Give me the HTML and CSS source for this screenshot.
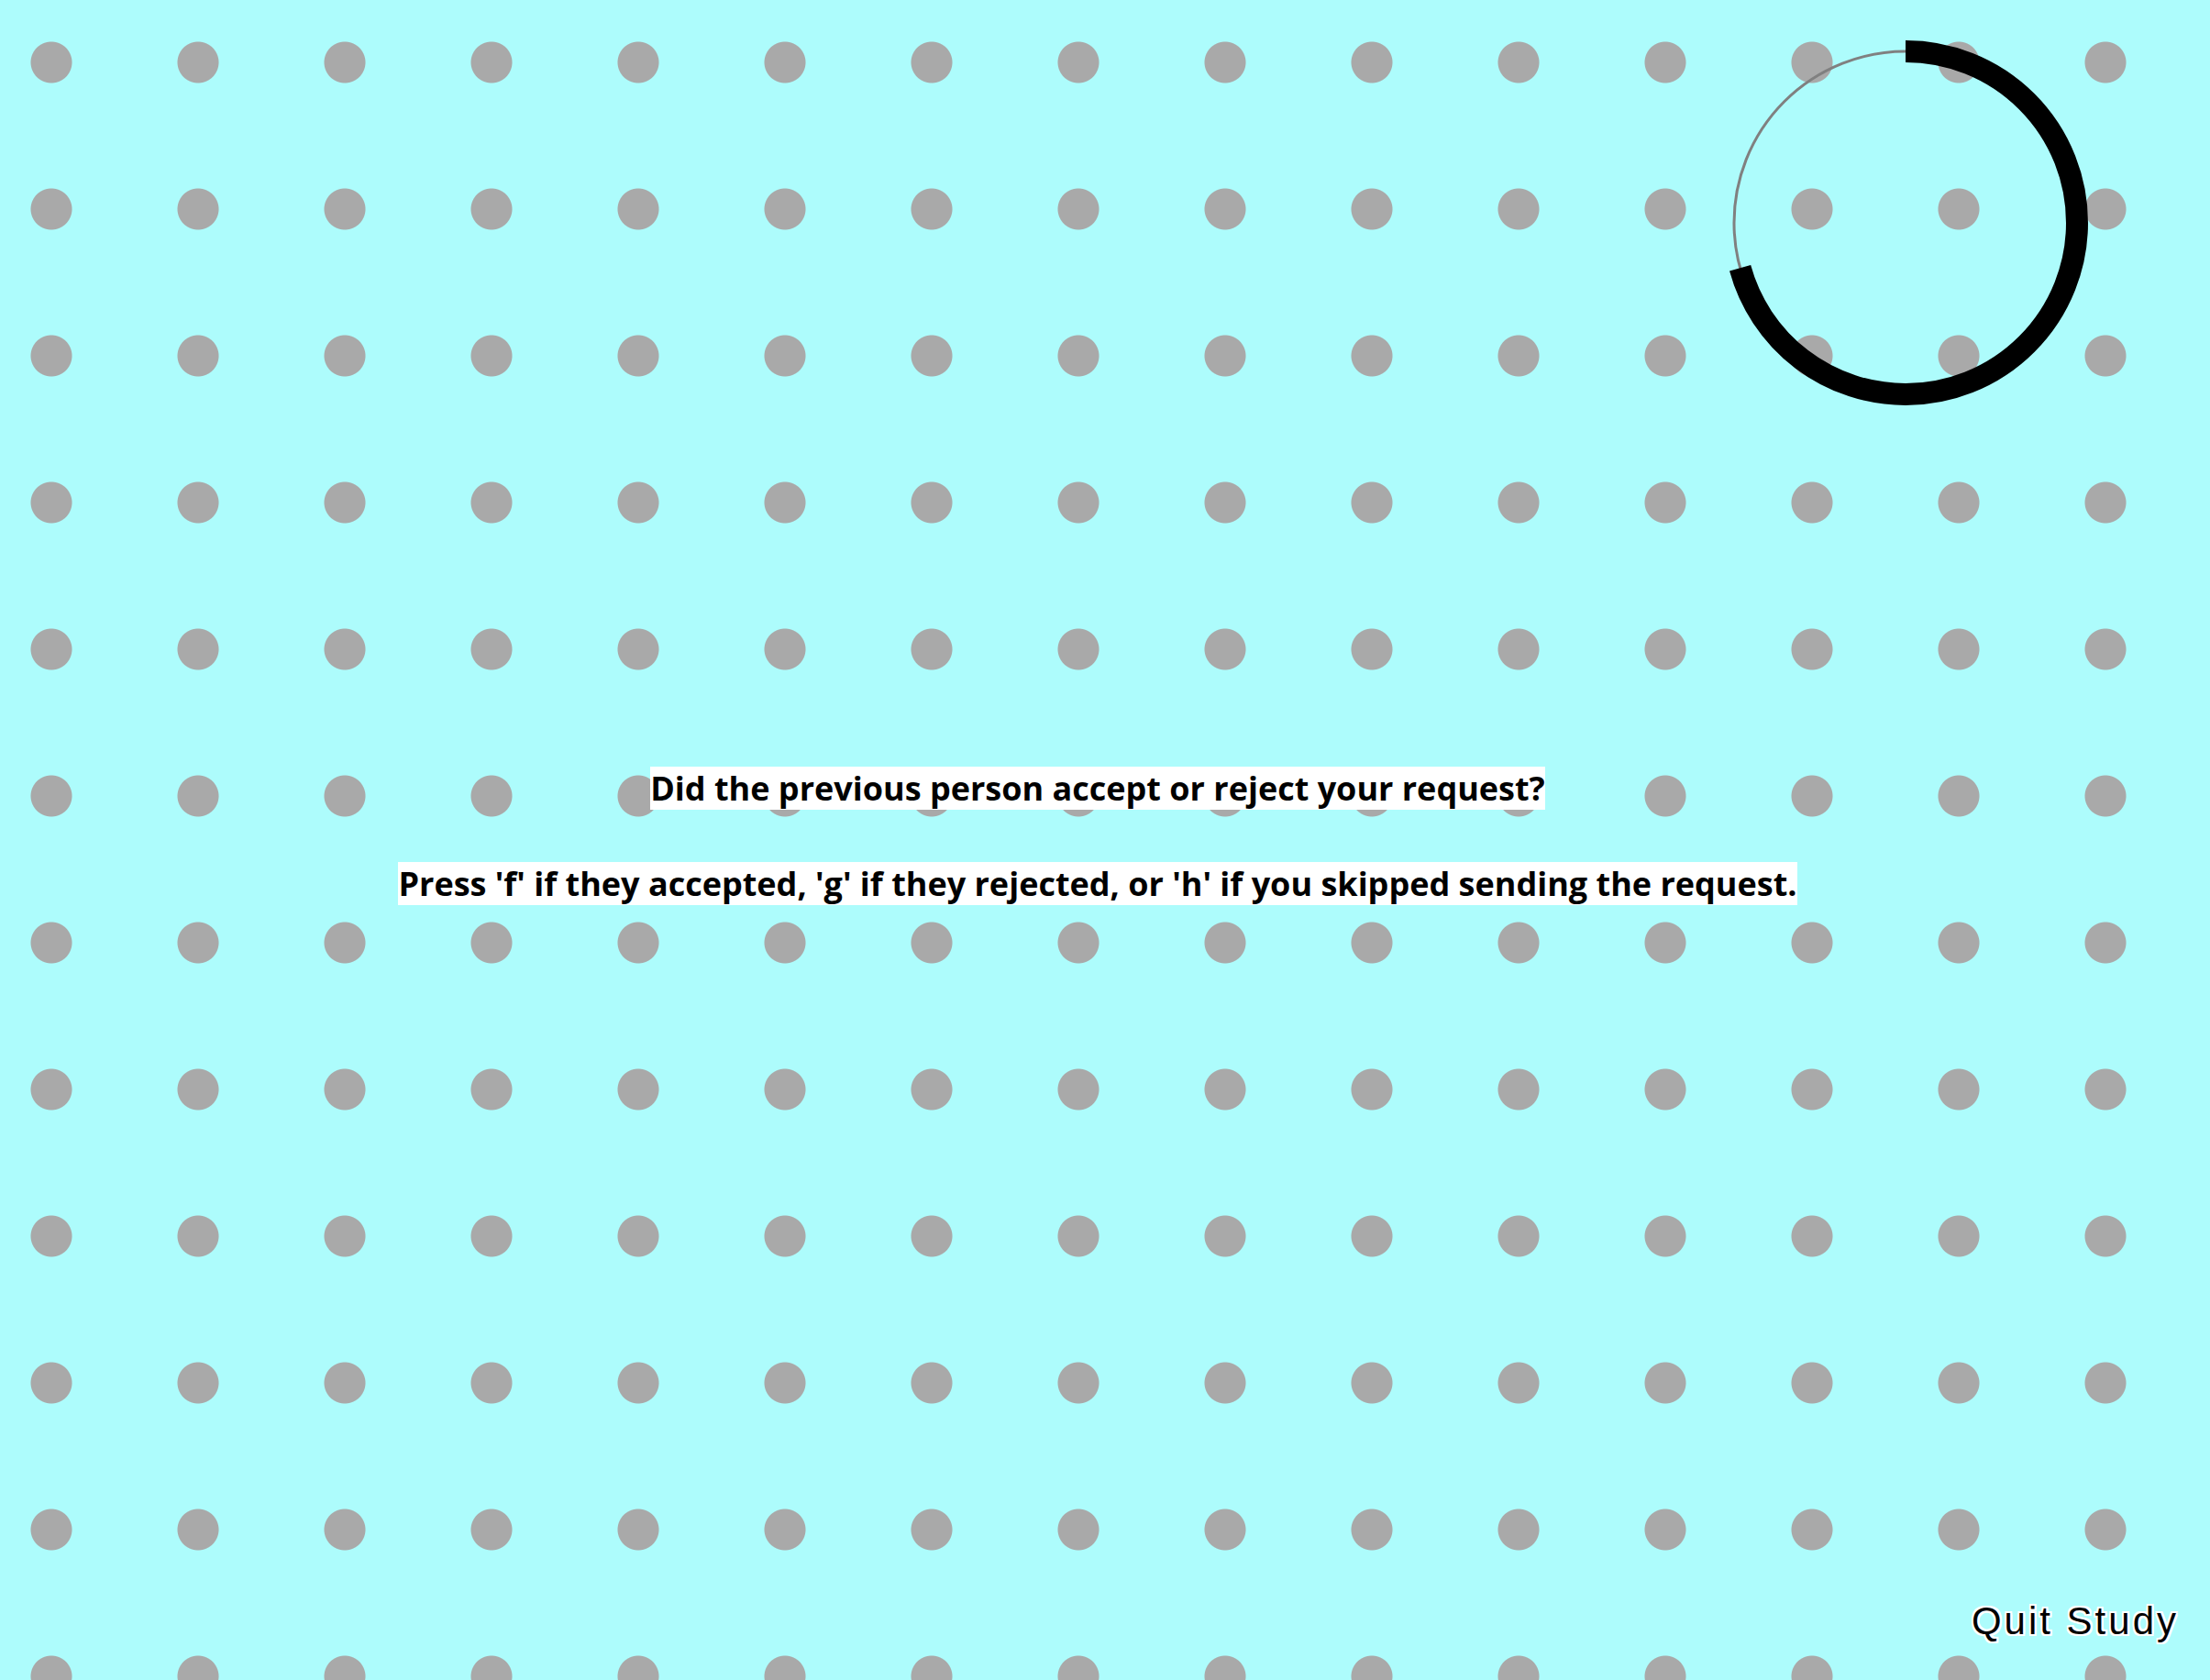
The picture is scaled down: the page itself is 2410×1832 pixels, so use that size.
FILE: index.html
```html
<!DOCTYPE html>
<html lang="en">
<head>
<meta charset="utf-8">
<title>Study</title>
<link rel="stylesheet" href="styles.css">
</head>
<body>
<div class="stage">
  <div class="prompt">
    <p class="line"><span class="label">Did the previous person accept or reject your request?</span></p>
    <p class="line"><span class="label">Press 'f' if they accepted, 'g' if they rejected, or 'h' if you skipped sending the request.</span></p>
  </div>
  <svg class="timer" width="400" height="400" viewBox="0 0 400 400" aria-hidden="true">
    <circle class="track" cx="200" cy="200" r="187"></circle>
    <circle class="progress" cx="200" cy="200" r="187" transform="rotate(-90 200 200)"></circle>
  </svg>
  <a class="quit" href="#">Quit Study</a>
</div>
</body>
</html>
```
FILE: styles.css
```css
html, body {
  margin: 0;
  padding: 0;
}
body {
  width: 2410px;
  height: 1832px;
  overflow: hidden;
  background-color: #adfcfc;
  background-image: radial-gradient(circle, #a9a9a9 22px, rgba(169,169,169,0) 23px);
  background-size: 160px 160px;
  background-position: -24px -12px;
  font-family: "Open Sans", "Liberation Sans", sans-serif;
}
.stage {
  position: relative;
  box-sizing: border-box;
  height: 1832px;
  padding-right: 16px;
  padding-bottom: 9px;
  display: flex;
  flex-direction: column;
  align-items: center;
  justify-content: center;
}
.prompt {
  display: flex;
  flex-direction: column;
  align-items: center;
  gap: 57px;
}
.line {
  margin: 0;
  font-size: 36px;
  font-weight: 700;
  line-height: 47px;
  color: #000;
}
.label {
  display: inline-block;
  background: #fff;
  height: 47px;
  line-height: 47px;
}
.timer {
  position: absolute;
  left: 1878px;
  top: 43px;
}
.track {
  fill: none;
  stroke: #808080;
  stroke-width: 3;
}
.progress {
  fill: none;
  stroke: #000;
  stroke-width: 24;
  stroke-dasharray: 831 1200;
}
.quit {
  position: absolute;
  right: 34px;
  bottom: 40px;
  font-family: "Liberation Sans", Arial, sans-serif;
  font-size: 42px;
  letter-spacing: 3px;
  color: #000;
  text-decoration: none;
  text-shadow: -2px -2px 0 #fff, 2px -2px 0 #fff, -2px 2px 0 #fff, 2px 2px 0 #fff, 0 2px 0 #fff, 0 -2px 0 #fff, 2px 0 0 #fff, -2px 0 0 #fff;
}
```
